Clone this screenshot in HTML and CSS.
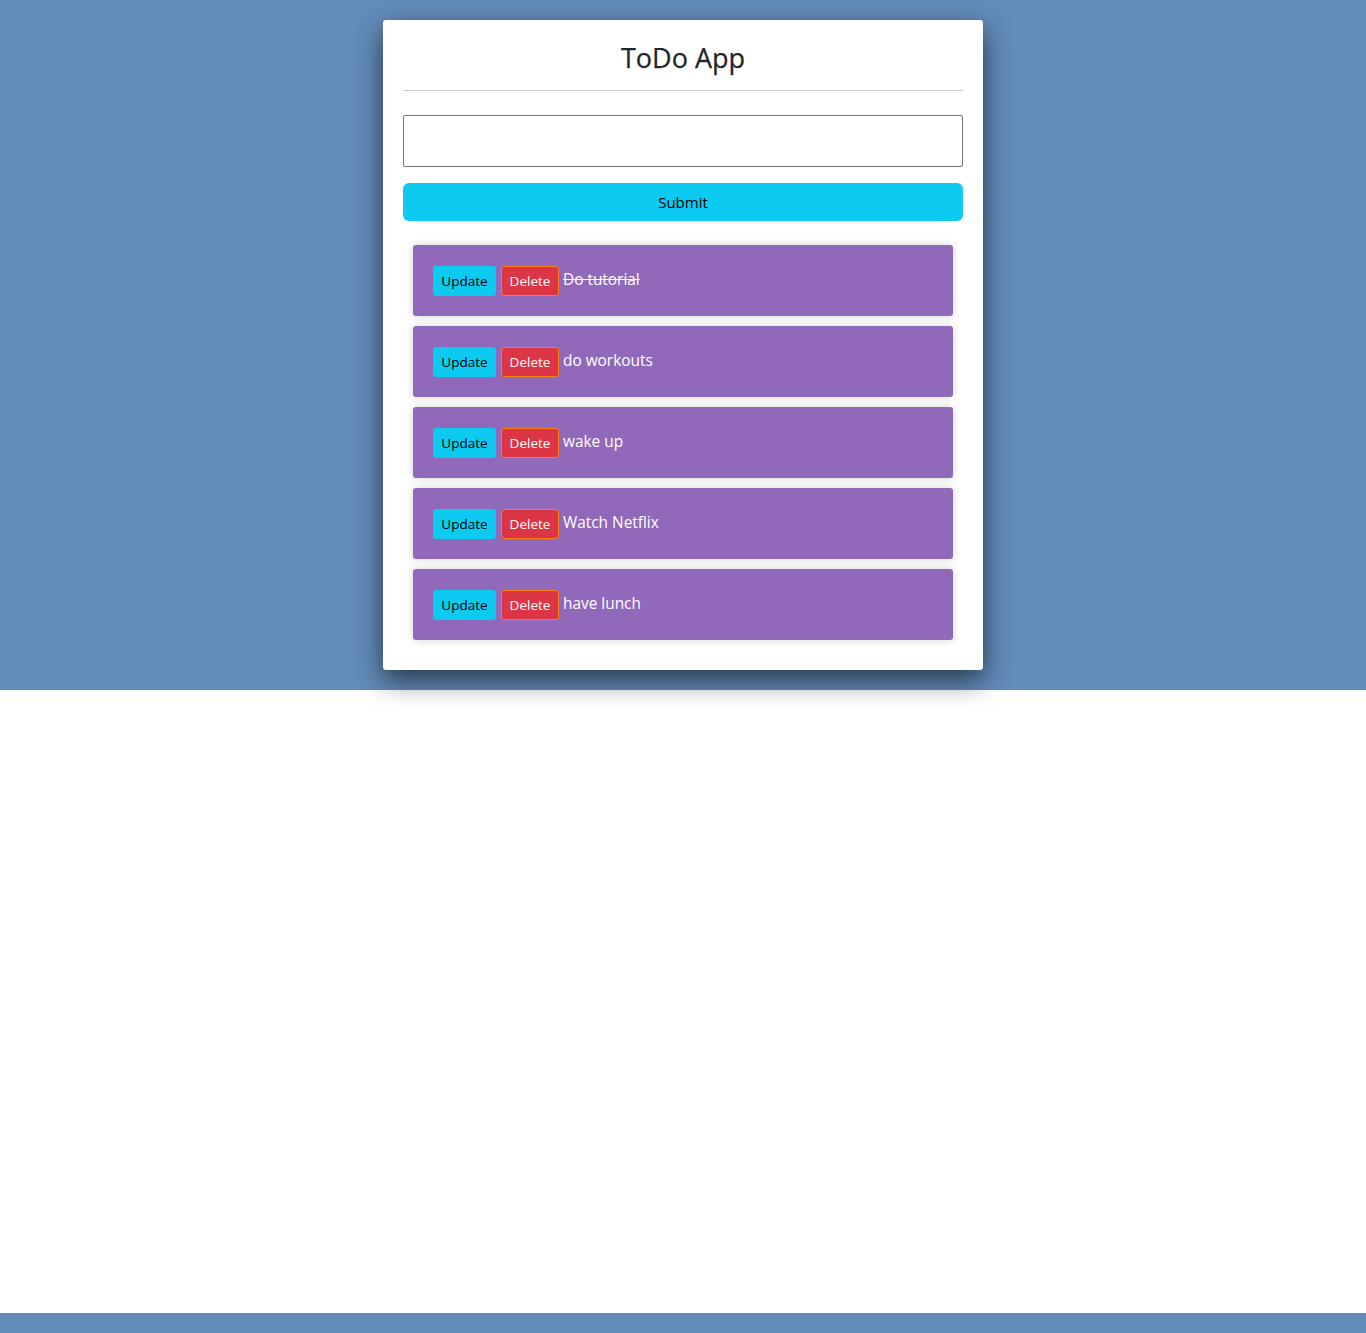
FILE: index.html
```html
<!DOCTYPE html>
<html lang="en">
<head>
<meta charset="utf-8">
<title>ToDo App</title>
<link rel="stylesheet" href="styles.css">
</head>
<body>
<div class="page">
  <section class="stage">
    <div class="card">
      <h1 class="title">ToDo App</h1>
      <hr class="rule">
      <form class="form" onsubmit="return false">
        <input class="field" type="text">
        <button class="submit" type="submit">Submit</button>
      </form>
      <ul class="list">
        <li class="item"><button class="btn btn-update">Update</button><button class="btn btn-delete">Delete</button><span class="text done">Do tutorial</span></li>
        <li class="item"><button class="btn btn-update">Update</button><button class="btn btn-delete">Delete</button><span class="text">do workouts</span></li>
        <li class="item"><button class="btn btn-update">Update</button><button class="btn btn-delete">Delete</button><span class="text">wake up</span></li>
        <li class="item"><button class="btn btn-update">Update</button><button class="btn btn-delete">Delete</button><span class="text">Watch Netflix</span></li>
        <li class="item"><button class="btn btn-update">Update</button><button class="btn btn-delete">Delete</button><span class="text">have lunch</span></li>
      </ul>
    </div>
  </section>
  <div class="spacer"></div>
  <footer class="footer"></footer>
</div>
</body>
</html>
```
FILE: styles.css
```css
* { box-sizing: border-box; }
html, body { margin: 0; padding: 0; }
body {
  background: #fff;
  font-family: "Open Sans", "Noto Sans", sans-serif;
  color: #212529;
}
.page {
  min-height: 100vh;
  display: flex;
  flex-direction: column;
}
.stage {
  background: #638cba;
  padding: 20px 0;
  display: flex;
  justify-content: center;
}
.card {
  position: relative;
  z-index: 1;
  width: 600px;
  background: #fff;
  border-radius: 3px;
  padding: 20px 20px 30px;
  box-shadow: 0 10px 28px rgba(0, 0, 0, 0.62);
}
.title {
  margin: 0;
  text-align: center;
  font-size: 27px;
  font-weight: 500;
  line-height: 36px;
  height: 50px;
  padding-top: 0;
  color: #212529;
  -webkit-text-stroke: 0.25px #212529;
}
.rule {
  margin: 0;
  border: 0;
  border-top: 1px solid #cfcfcf;
}
.form {
  margin-top: 24px;
  display: flex;
  flex-direction: column;
  gap: 16px;
}
.field {
  height: 52px;
  width: 100%;
  border: 1px solid #767676;
  border-radius: 2px;
  font: inherit;
  padding: 0 8px;
}
.submit {
  height: 38px;
  width: 100%;
  border: 0;
  border-radius: 6px;
  background: #0dcaf0;
  color: #000;
  font: inherit;
  font-size: 15px;
}
.list {
  list-style: none;
  margin: 24px 0 0;
  padding: 0 10px;
  display: flex;
  flex-direction: column;
  gap: 10px;
}
.item {
  background: #9069bb;
  border-radius: 3px;
  height: 71px;
  padding: 21px 20px 0;
  display: flex;
  align-items: flex-start;
  box-shadow: 0 0 8px rgba(0, 0, 0, 0.18);
}
.btn {
  height: 30px;
  font: inherit;
  font-size: 13.5px;
  padding: 0 4px;
  border-radius: 3px;
  margin-right: 5px;
}
.btn-update {
  width: 63px;
  background: #0dcaf0;
  border: 1px solid #0dcaf0;
  color: #000;
}
.btn-delete {
  width: 58px;
  margin-right: 4px;
  background: #dc3545;
  border: 1px solid #fd7e14;
  color: #fff;
}
.text {
  color: #fff;
  font-size: 15.4px;
  line-height: 28px;
}
.done { text-decoration: line-through; }
.spacer { flex: 1; }
.footer {
  height: 20px;
  background: #638cba;
}
```
